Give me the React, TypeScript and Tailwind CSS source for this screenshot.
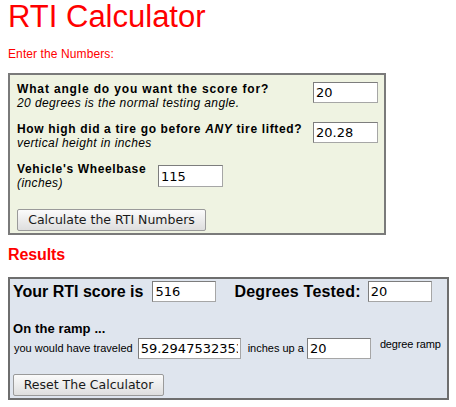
import React from "react";

const sans = "font-['Liberation_Sans',Arial,sans-serif]";
const field =
  "h-[21px] bg-white border border-[#a6a6a6] border-t-[#7d7d7d] border-l-[#7d7d7d] px-[2px] text-[13px] text-black font-['DejaVu_Sans',sans-serif] outline-none";
const btn =
  "h-[22px] px-0 flex items-center justify-center whitespace-nowrap rounded-[2px] border border-[#9a9a9a] bg-gradient-to-b from-[#fbfbfb] to-[#dedede] text-[12.5px] text-[#1a1a1a] font-['DejaVu_Sans',sans-serif] leading-none";

function Label({ title, note, wide }: { title: React.ReactNode; note: string; wide?: boolean }) {
  return (
    <div className="leading-[14px]">
      <div
        className={`text-[12px] font-bold whitespace-nowrap ${wide ? "tracking-[0.85px]" : "tracking-[0.65px]"}`}
      >
        {title}
      </div>
      <div className="text-[12px] italic tracking-[0.4px] whitespace-nowrap">{note}</div>
    </div>
  );
}

export default function App() {
  return (
    <div className={`${sans} bg-white text-black w-[456px] h-[407px] px-2`}>
      <h1 className="text-[31px] leading-[34px] text-[#ff0000] font-normal">RTI Calculator</h1>
      <p className="mt-[13px] text-[12px] leading-[14px] tracking-[0.1px] text-[#ff0000]">
        Enter the Numbers:
      </p>

      {/* input panel */}
      <div className="mt-[12px] w-[378px] border-2 border-[#7a7a7a] bg-[#eff3e2] pl-[7px] pt-[7px] pb-[2px]">
        <div className="flex items-start">
          <div className="w-[296px]">
            <Label wide title="What angle do you want the score for?" note="20 degrees is the normal testing angle." />
          </div>
          <input className={`${field} w-[65px]`} defaultValue="20" />
        </div>
        <div className="mt-[12px] flex items-start">
          <div className="w-[296px]">
            <Label
              title={
                <>
                  How high did a tire go before <i>ANY</i> tire lifted?
                </>
              }
              note="vertical height in inches"
            />
          </div>
          <input className={`${field} w-[65px]`} defaultValue="20.28" />
        </div>
        <div className="mt-[12px] flex items-center">
          <div className="w-[141px]">
            <Label title="Vehicle's Wheelbase" note="(inches)" />
          </div>
          <input className={`${field} w-[65px] h-[22px]`} defaultValue="115" />
        </div>
        <button className={`${btn} mt-[19px] w-[189px]`}>Calculate the RTI Numbers</button>
      </div>

      <h2 className="mt-[12px] text-[16px] leading-[16px] font-bold tracking-[-0.1px] text-[#ff0000]">
        Results
      </h2>

      {/* results panel */}
      <div className="mt-[14px] w-[441px] border-2 border-[#6e6e6e] bg-[#dfe5ee] pl-[3px] pt-[2px] pb-[2px]">
        <div className="flex items-center h-[21px]">
          <span className="text-[16px] font-bold">Your RTI score is</span>
          <input className={`${field} ml-[9px] w-[64px]`} defaultValue="516" />
          <span className="ml-[18px] text-[16px] font-bold tracking-[0.2px]">Degrees Tested:</span>
          <input className={`${field} ml-[7px] w-[64px]`} defaultValue="20" />
        </div>
        <div className="mt-[20px] text-[13px] leading-[14px] font-bold tracking-[0.1px]">On the ramp ...</div>
        <div className="mt-[2px] flex items-start">
          <span className="ml-[1px] h-[21px] flex items-center text-[11px]">you would have traveled</span>
          <input className={`${field} ml-[5px] w-[103px]`} defaultValue="59.2947532353" />
          <span className="ml-[7px] h-[21px] flex items-center text-[11px]">inches up a</span>
          <input className={`${field} ml-[3px] w-[64px]`} defaultValue="20" />
          <span className="ml-[9px] text-[11px] leading-[12px] tracking-[-0.15px]">degree ramp</span>
        </div>
        <button className={`${btn} mt-[15px] w-[151px] h-[21px]`}>Reset The Calculator</button>
      </div>
    </div>
  );
}
